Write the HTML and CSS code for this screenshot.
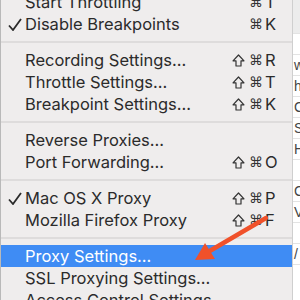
FILE: index.html
```html
<!DOCTYPE html>
<html lang="en">
<head>
  <meta charset="UTF-8">
  <title>Proxy Menu</title>
  <link rel="stylesheet" href="styles.css">
</head>
<body>
  <div class="screen">
    <div class="edge-left">
      <div class="edge-blue"></div>
    </div>

    <div class="menu">
      <div class="item"><span class="mark"></span><span class="label">Start Throttling</span><span class="mods"><span class="cmd">⌘</span></span><span class="key">T</span></div>
      <div class="item"><span class="mark"><svg width="14" height="13" viewBox="0 0 14 13"><path d="M1 7.5 L5 12 L13 1" fill="none" stroke="#2a2a2a" stroke-width="1.8"/></svg></span><span class="label">Disable Breakpoints</span><span class="mods"><span class="cmd">⌘</span></span><span class="key">K</span></div>
      <div class="sep"></div>
      <div class="item"><span class="mark"></span><span class="label">Recording Settings...</span><span class="mods"><svg class="shift" width="13" height="13" viewBox="0 0 13 13"><path d="M6.5 1 L12 6.8 H9 V12 H4 V6.8 H1 Z" fill="none" stroke="#333" stroke-width="1.2" stroke-linejoin="round"/></svg><span class="cmd">⌘</span></span><span class="key">R</span></div>
      <div class="item"><span class="mark"></span><span class="label">Throttle Settings...</span><span class="mods"><svg class="shift" width="13" height="13" viewBox="0 0 13 13"><path d="M6.5 1 L12 6.8 H9 V12 H4 V6.8 H1 Z" fill="none" stroke="#333" stroke-width="1.2" stroke-linejoin="round"/></svg><span class="cmd">⌘</span></span><span class="key">T</span></div>
      <div class="item"><span class="mark"></span><span class="label">Breakpoint Settings...</span><span class="mods"><svg class="shift" width="13" height="13" viewBox="0 0 13 13"><path d="M6.5 1 L12 6.8 H9 V12 H4 V6.8 H1 Z" fill="none" stroke="#333" stroke-width="1.2" stroke-linejoin="round"/></svg><span class="cmd">⌘</span></span><span class="key">K</span></div>
      <div class="sep"></div>
      <div class="item"><span class="mark"></span><span class="label">Reverse Proxies...</span></div>
      <div class="item"><span class="mark"></span><span class="label">Port Forwarding...</span><span class="mods"><svg class="shift" width="13" height="13" viewBox="0 0 13 13"><path d="M6.5 1 L12 6.8 H9 V12 H4 V6.8 H1 Z" fill="none" stroke="#333" stroke-width="1.2" stroke-linejoin="round"/></svg><span class="cmd">⌘</span></span><span class="key">O</span></div>
      <div class="sep"></div>
      <div class="item"><span class="mark"><svg width="14" height="13" viewBox="0 0 14 13"><path d="M1 7.5 L5 12 L13 1" fill="none" stroke="#2a2a2a" stroke-width="1.8"/></svg></span><span class="label">Mac OS X Proxy</span><span class="mods"><svg class="shift" width="13" height="13" viewBox="0 0 13 13"><path d="M6.5 1 L12 6.8 H9 V12 H4 V6.8 H1 Z" fill="none" stroke="#333" stroke-width="1.2" stroke-linejoin="round"/></svg><span class="cmd">⌘</span></span><span class="key">P</span></div>
      <div class="item"><span class="mark"></span><span class="label">Mozilla Firefox Proxy</span><span class="mods"><svg class="shift" width="13" height="13" viewBox="0 0 13 13"><path d="M6.5 1 L12 6.8 H9 V12 H4 V6.8 H1 Z" fill="none" stroke="#333" stroke-width="1.2" stroke-linejoin="round"/></svg><span class="cmd">⌘</span></span><span class="key">F</span></div>
      <div class="sep"></div>
      <div class="item selected"><span class="mark"></span><span class="label">Proxy Settings...</span></div>
      <div class="item"><span class="mark"></span><span class="label">SSL Proxying Settings...</span></div>
      <div class="item"><span class="mark"></span><span class="label">Access Control Settings...</span></div>
    </div>

    <div class="edge-right">
      <div class="bg-row bg-head"></div>
      <div class="bg-row"></div>
      <div class="bg-row">w</div>
      <div class="bg-row">h</div>
      <div class="bg-row">C</div>
      <div class="bg-row">S</div>
      <div class="bg-row">H</div>
      <div class="bg-row"></div>
      <div class="bg-row">C</div>
      <div class="bg-row">V</div>
      <div class="bg-row"></div>
      <div class="bg-row">/</div>
    </div>

    <svg class="arrow" width="300" height="300" viewBox="0 0 300 300">
      <line x1="266" y1="218" x2="208" y2="252" stroke="#f0512a" stroke-width="4.5" stroke-linecap="round"/>
      <polygon points="195,260 205,243 215,259" fill="#f0512a"/>
    </svg>
  </div>
</body>
</html>
```

FILE: styles.css
```css
body {
  margin: 0;
  background: #fff;
}

.screen {
  position: relative;
  display: flex;
  width: 300px;
  height: 300px;
  overflow: hidden;
  font-family: Inter, "Liberation Sans", sans-serif;
}

.edge-left {
  width: 3px;
  background: #dedede;
  border-right: 1px solid #b9b9b9;
  box-sizing: border-box;
  padding-top: 70px;
}

.edge-blue {
  height: 45px;
  background: #3f7fd8;
}

.menu {
  width: 292px;
  margin-top: -9px;
  background: #efeded;
  display: flex;
  flex-direction: column;
  flex-shrink: 0;
}

.item {
  display: flex;
  align-items: center;
  height: 22px;
  padding-right: 14px;
  color: #2b2b2b;
  font-size: 16.5px;
  flex-shrink: 0;
}

.item.selected {
  background: #3f8cf4;
  color: #fff;
}

.mark {
  width: 24px;
  flex-shrink: 0;
  display: flex;
  padding-left: 7px;
  box-sizing: border-box;
}

.label {
  flex: 1;
  white-space: nowrap;
}

.mods {
  display: flex;
  align-items: center;
  gap: 4px;
}

.cmd {
  font-family: "DejaVu Sans", sans-serif;
  font-size: 14px;
  color: #333;
}

.key {
  width: 14px;
  padding-left: 2px;
}

.sep {
  height: 14px;
  flex-shrink: 0;
  display: flex;
  align-items: center;
}

.sep::after {
  content: "";
  flex: 1;
  height: 2px;
  background: #dedcdc;
}

.edge-right {
  flex: 1;
  background: #fff;
  border-left: 1px solid #cfcfcf;
  display: flex;
  flex-direction: column;
  font-family: "Liberation Sans", sans-serif;
  font-size: 14px;
  color: #444;
  margin-left: -1px;
}

.bg-row {
  height: 20px;
  flex-shrink: 0;
  border-bottom: 1px solid #e3e3e3;
  padding-left: 1px;
  line-height: 20px;
}

.bg-head {
  height: 33px;
  background: #ececec;
}

.arrow {
  position: absolute;
  left: 0;
  top: 0;
}
```
